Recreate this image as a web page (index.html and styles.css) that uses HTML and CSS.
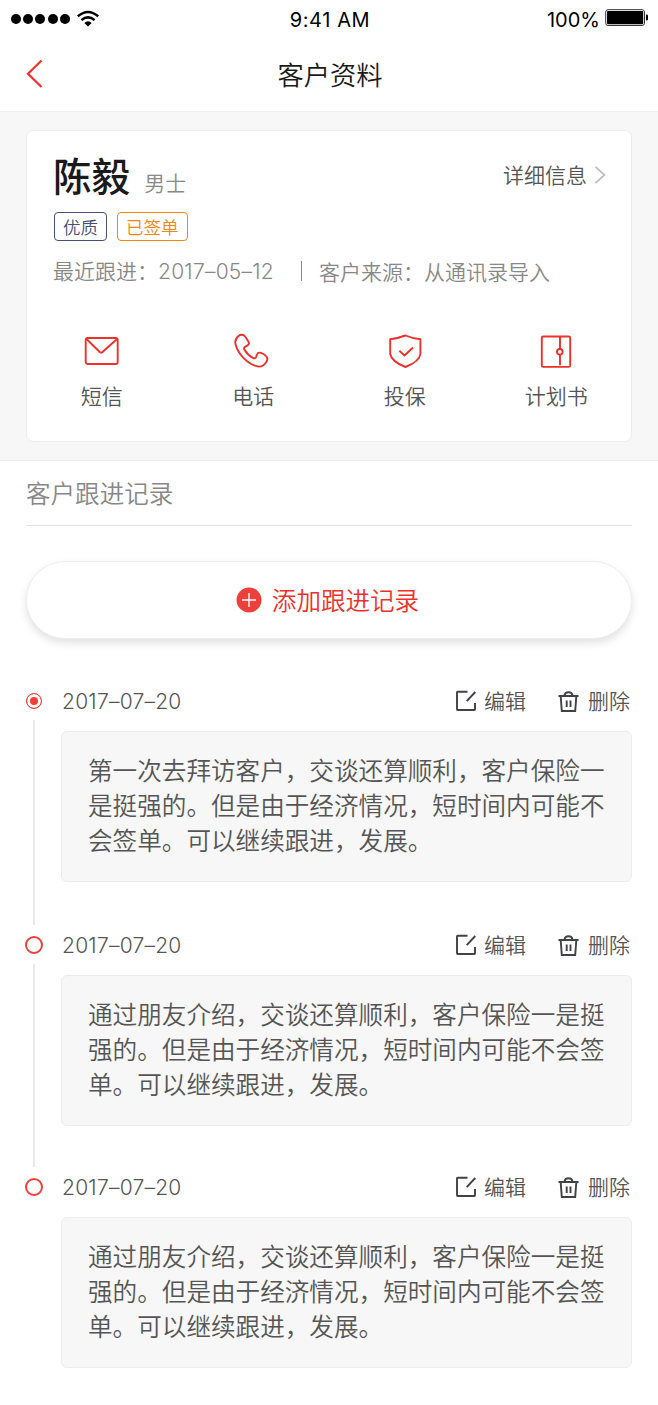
FILE: index.html
```
<!DOCTYPE html>
<html lang="zh-CN">
<head>
<meta charset="utf-8">
<title>客户资料</title>
<link rel="stylesheet" href="styles.css">
</head>
<body>
<svg class="sprite" width="0" height="0" aria-hidden="true">
  <symbol id="edit" viewBox="0 0 22 22"><path d="M13.500 1.800H3.800Q3 1.800 3 2.600V19.200Q3 20 3.800 20H20.200Q21 20 21 19.200V13M21.300 2L12.700 11.200"/></symbol>
  <symbol id="trash" viewBox="0 0 22 22"><path d="M.5 6H20.500M6.500 5.500Q7 2.200 10.500 2.200T14.500 5.500M2.700 6.500L3.800 21H17.200L18.300 6.500M8.700 10.500V17M12.500 10.500V17"/></symbol>
</svg>
<header class="status">
  <div class="signal"><i></i><i></i><i></i><i></i><i></i>
    <svg class="wifi" width="24" height="18" viewBox="0 0 24 18"><path d="M1.800 6.300Q12-2.400 22.200 6.300M5.400 10.100Q12 4.700 18.600 10.100" fill="none" stroke="#000" stroke-width="2.500"/><path d="M8.300 12.900Q12 9.700 15.700 12.900L12 16.500Z"/></svg>
  </div>
  <div class="time">9:41 AM</div>
  <div class="power">100%<svg width="44" height="18" viewBox="0 0 44 18"><rect x=".7" y=".7" width="38.800" height="15.800" rx="2.400" fill="#fff" stroke="#333"/><rect x="2" y="2" width="36.200" height="13.200" rx="1"/><path d="M41 5.500h.8q1.200 0 1.200 1.200v3.600q0 1.200-1.200 1.200H41z"/></svg></div>
</header>
<nav class="nav">
  <svg class="back" width="18" height="30" viewBox="0 0 18 30"><path d="M15.500 1.500L2 14.700L15.500 28"/></svg>
  <h1>客户资料</h1>
</nav>
<section class="profile">
  <div class="card">
    <div class="person">
      <h2>陈毅</h2><span class="gender">男士</span>
      <a class="detail">详细信息<svg width="12" height="20" viewBox="0 0 12 20"><path d="M1.500 1.800L10.300 10L1.500 18.200"/></svg></a>
    </div>
    <div class="tags"><span class="tag blue">优质</span><span class="tag orange">已签单</span></div>
    <div class="meta"><span>最近跟进：<b class="num">2017–05–12</b></span><i class="bar"></i><span>客户来源：从通讯录导入</span></div>
    <div class="actions">
      <a><svg width="36" height="36" viewBox="0 0 36 36"><rect x="1.700" y="5" width="32" height="26" rx="2"/><path d="M2.500 6L15.700 19Q17 20.500 18.500 19L33 6"/></svg>短信</a>
      <a><svg width="36" height="36" viewBox="0 0 36 36"><path d="M3.500 3C5.500 1.200 8.700 1.300 10.300 3.800L13.500 8.800C14.500 10.600 13.600 11.800 12.200 12.600L10 13.800C8.900 14.500 8.800 15.500 9.500 16.800C11.300 20 14.500 23 17.800 24.800C19.400 25.600 20.600 25.200 21.200 23.800L22 21.500C22.700 19.700 24 19.300 25.800 19.900C28 20.600 30 21.800 31.400 23.500C33 25.400 32.600 27.300 31.200 29.300C29 32.500 26.300 34.200 22.500 33.400C12.800 31.200 3.300 21.500 .6 11.500C-.4 8 .8 5.300 3.500 3Z"/></svg>电话</a>
      <a><svg width="36" height="36" viewBox="0 0 36 36"><path d="M18.400 2.500Q25 5.400 33.400 6.200V21Q32.500 28.500 18.400 34Q4.500 28.500 3.200 21V6.200Q11 5.400 18.400 2.500ZM12.300 17.800L17.500 22.500L26 14.500"/></svg>投保</a>
      <a><svg width="36" height="36" viewBox="0 0 36 36"><rect x="3.800" y="3.500" width="28.400" height="30.400" rx="1.500"/><path d="M22 4V16M22 22V32.300"/><circle cx="21.800" cy="18.800" r="2.800"/></svg>计划书</a>
    </div>
  </div>
</section>
<main class="records">
  <h3>客户跟进记录</h3>
  <button class="add"><svg width="26" height="26" viewBox="0 0 26 26"><circle cx="13" cy="13" r="12.500" fill="#ee403a"/><path d="M6 13H20M13 6V20" stroke="#fff" stroke-width="1.400"/></svg><span>添加跟进记录</span></button>
  <article class="item">
    <div class="rail"><span class="dot current"></span><span class="line"></span></div>
    <div class="entry">
      <div class="head"><time class="num">2017–07–20</time><a><svg width="22" height="22"><use href="#edit"/></svg><span>编辑</span></a><a><svg width="22" height="22"><use href="#trash"/></svg><span>删除</span></a></div>
      <p>第一次去拜访客户，交谈还算顺利，客户保险一<br>是挺强的。但是由于经济情况，短时间内可能不<br>会签单。可以继续跟进，发展。</p>
    </div>
  </article>
  <article class="item second">
    <div class="rail"><span class="dot"></span><span class="line"></span></div>
    <div class="entry">
      <div class="head"><time class="num">2017–07–20</time><a><svg width="22" height="22"><use href="#edit"/></svg><span>编辑</span></a><a><svg width="22" height="22"><use href="#trash"/></svg><span>删除</span></a></div>
      <p>通过朋友介绍，交谈还算顺利，客户保险一是挺<br>强的。但是由于经济情况，短时间内可能不会签<br>单。可以继续跟进，发展。</p>
    </div>
  </article>
  <article class="item last">
    <div class="rail"><span class="dot"></span></div>
    <div class="entry">
      <div class="head"><time class="num">2017–07–20</time><a><svg width="22" height="22"><use href="#edit"/></svg><span>编辑</span></a><a><svg width="22" height="22"><use href="#trash"/></svg><span>删除</span></a></div>
      <p>通过朋友介绍，交谈还算顺利，客户保险一是挺<br>强的。但是由于经济情况，短时间内可能不会签<br>单。可以继续跟进，发展。</p>
    </div>
  </article>
</main>
</body>
</html>
```
FILE: styles.css
```
* { box-sizing: border-box; }
body { margin: 0; height: 1405px; background: #fff; color: #555; font: 350 21px/30px "Noto Sans CJK SC DemiLight", "Noto Sans CJK SC", sans-serif; }
h1, h2, h3, p { margin: 0; font-weight: inherit; }
svg { display: block; flex: none; overflow: visible; }
.sprite { display: block; height: 0; }
.num { font-family: Inter, sans-serif; font-weight: 350; letter-spacing: .25px; }

.status { display: grid; grid-template-columns: 1fr auto 1fr; align-items: center; height: 38px; padding: 0 9px 0 11px; color: #000; font: 400 20px/24px Inter, sans-serif; }
.signal { display: flex; align-items: center; gap: 2.200px; }
.signal i { width: 10px; height: 10px; border-radius: 50%; background: #000; }
.wifi { margin-left: 4px; }
.time { padding-top: 2px; letter-spacing: .6px; }
.power { display: flex; justify-content: flex-end; gap: 5px; padding-top: 2px; }
.power svg { margin-top: 1px; }

.nav { display: grid; grid-template-columns: 40px 1fr 40px; align-items: center; height: 73px; padding: 0 25px 2px 27px; color: #1a1a1a; }
.nav h1 { font-size: 26.300px; line-height: 38px; text-align: center; }
.back { margin-left: -1px; fill: none; stroke: #f03530; stroke-width: 2.300; }

.profile { height: 350px; padding: 18px 26px; background: #f7f7f7; border-top: 1px solid #eee; border-bottom: 1px solid #eee; }
.card { height: 312px; padding: 18px 26px 0; background: #fff; border: 1px solid #ececec; border-radius: 7px; }
.person { display: flex; align-items: baseline; height: 50px; }
.person h2 { color: #1a1a1a; font-family: "Noto Sans CJK SC", sans-serif; font-size: 38.600px; font-weight: 500; line-height: 50px; }
.gender { margin-left: 14px; color: #888; }
.detail { display: flex; align-items: center; gap: 7px; margin: 0 -1px 0 auto; align-self: center; }
.detail svg { margin-top: 2px; fill: none; stroke: #bbb; stroke-width: 1.700; }
.tags { display: flex; gap: 10px; margin-top: 13px; padding-left: 1px; }
.tag { height: 29px; padding: 0 8px; border: 1px solid; border-radius: 4px; font-size: 17.500px; line-height: 27px; }
.blue { color: #454f78; }
.orange { color: #f58512; }
.meta { display: flex; align-items: center; height: 30px; margin-top: 15px; color: #888; }
.bar { width: 1px; height: 20px; margin: 0 17px 0 27px; background: #888; }
.actions { display: grid; grid-template-columns: repeat(4, 1fr); margin: 47px -27px 0; }
.actions a { display: flex; flex-direction: column; align-items: center; gap: 11px; }
.actions svg { fill: none; stroke: #ed312b; stroke-width: 1.900; stroke-linejoin: round; }

.records { padding: 0 26px; }
.records h3 { height: 65px; border-bottom: 1px solid #e3e3e3; color: #888; font-size: 24.560px; line-height: 63px; }
.add { display: flex; align-items: center; justify-content: center; gap: 10px; width: 100%; height: 78px; margin: 35px 0 47px; padding: 0 9px 0 6px; border: 1px solid #eee; border-radius: 39px; background: #fff; box-shadow: 0 4px 9px rgba(0, 0, 0, .12); color: #ed312b; font: inherit; font-size: 24.560px; line-height: 36px; }
.add span { padding-bottom: 1px; }
.item { display: grid; grid-template-columns: 16px 1fr; gap: 19px; height: 244px; }
.second { height: 242px; }
.last { height: 182px; }
.rail { display: flex; flex-direction: column; align-items: center; padding: 6px 0 5px; gap: 10px; }
.dot { flex: none; width: 18px; height: 18px; border: 2px solid #ee403a; border-radius: 50%; }
.current { width: 16px; height: 16px; margin: 1px 0; border-width: 1px; background: #ee403a; box-shadow: inset 0 0 0 3px #fff; }
.line { flex: 1; width: 2px; background: #e9e9e9; }
.head { display: flex; align-items: center; height: 30px; }
.head time { margin-right: auto; padding: 2px 0 0 1px; }
.head a { display: flex; align-items: center; gap: 8px; margin-left: 30px; padding-right: 2px; }
.head a span { padding-bottom: 2px; }
.head svg { fill: none; stroke: #414148; stroke-width: 1.900; }
.entry p { height: 151px; margin-top: 15px; padding: 20px 0 0 26px; background: #f7f7f7; border: 1px solid #ececec; border-radius: 6px; font-size: 24.600px; line-height: 35px; white-space: nowrap; }
```
